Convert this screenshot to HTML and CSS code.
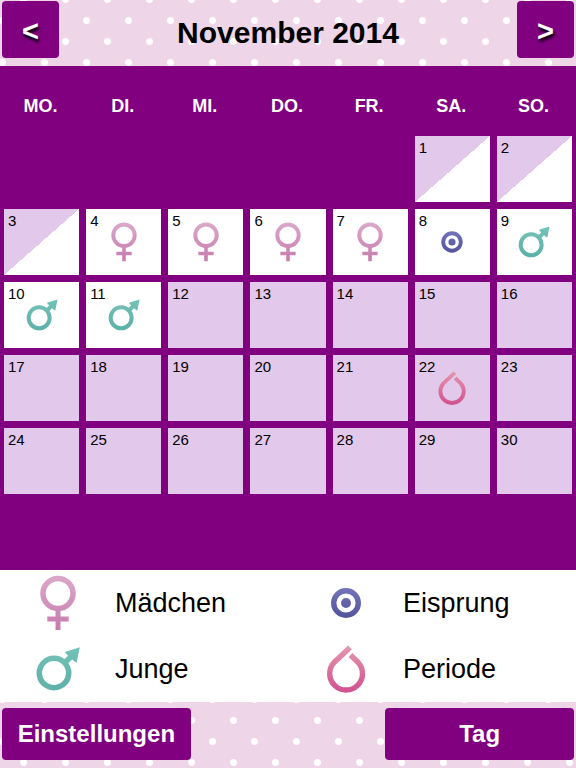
FILE: index.html
```html
<!DOCTYPE html>
<html lang="de">
<head>
    <meta charset="UTF-8">
    <meta name="viewport" content="width=device-width, initial-scale=1.0">
    <title>Kalender - November 2014</title>
    <link rel="stylesheet" href="styles.css">
</head>
<body>
    <!-- Icon definitions -->
    <svg class="icon-defs" aria-hidden="true">
        <defs>
            <linearGradient id="grad-girl" gradientUnits="userSpaceOnUse" x1="0" y1="0" x2="0" y2="56">
                <stop offset="0" stop-color="#dba9cb"/>
                <stop offset="1" stop-color="#c77bae"/>
            </linearGradient>
            <linearGradient id="grad-boy" gradientUnits="userSpaceOnUse" x1="0" y1="6" x2="0" y2="50">
                <stop offset="0" stop-color="#74c2b8"/>
                <stop offset="1" stop-color="#5cb0a8"/>
            </linearGradient>
            <linearGradient id="grad-egg" gradientUnits="userSpaceOnUse" x1="0" y1="12" x2="0" y2="43">
                <stop offset="0" stop-color="#7474bd"/>
                <stop offset="1" stop-color="#54549c"/>
            </linearGradient>
            <linearGradient id="grad-period" gradientUnits="userSpaceOnUse" x1="0" y1="4" x2="0" y2="52">
                <stop offset="0" stop-color="#e598ad"/>
                <stop offset="1" stop-color="#d0508f"/>
            </linearGradient>
            <symbol id="icon-girl" viewBox="0 0 56 56">
                <g fill="none" stroke="url(#grad-girl)" stroke-width="5.5">
                    <circle cx="28" cy="18.5" r="15"/>
                    <path d="M28 33.5 L28.01 55 M17.3 44 L38.7 44.01" stroke-width="5"/>
                </g>
            </symbol>
            <symbol id="icon-boy" viewBox="0 0 56 56">
                <circle cx="24" cy="32" r="14.7" fill="none" stroke="url(#grad-boy)" stroke-width="5.6"/>
                <path d="M32.5 20 L38 14.8 L34.8 11 L49.8 6.3 L46.5 22 L42 18.6 L36.5 24 Z" fill="url(#grad-boy)"/>
            </symbol>
            <symbol id="icon-egg" viewBox="0 0 56 56">
                <circle cx="28" cy="28" r="12.3" fill="none" stroke="url(#grad-egg)" stroke-width="5.4"/>
                <circle cx="28" cy="28" r="5" fill="url(#grad-egg)"/>
            </symbol>
            <symbol id="icon-period" viewBox="0 0 56 56">
                <path d="M32 6.5 L16 21.5 A16.4 16.4 0 1 0 40.2 21.5 L32.5 14" fill="none" stroke="url(#grad-period)" stroke-width="5.4"/>
            </symbol>
        </defs>
    </svg>

    <header class="header">
        <button type="button" class="btn nav-btn" aria-label="Vorheriger Monat">&lt;</button>
        <h1>November 2014</h1>
        <button type="button" class="btn nav-btn" aria-label="Nächster Monat">&gt;</button>
    </header>

    <main class="calendar">
        <table class="month">
            <thead>
                <tr>
                    <th>MO.</th>
                    <th>DI.</th>
                    <th>MI.</th>
                    <th>DO.</th>
                    <th>FR.</th>
                    <th>SA.</th>
                    <th>SO.</th>
                </tr>
            </thead>
            <tbody>
                <tr>
                    <td class="empty" colspan="5"></td>
                    <td class="half"><div class="day"><span>1</span></div></td>
                    <td class="half"><div class="day"><span>2</span></div></td>
                </tr>
                <tr>
                    <td class="half"><div class="day"><span>3</span></div></td>
                    <td class="fertile"><div class="day"><span>4</span><svg class="icon"><use href="#icon-girl"/></svg></div></td>
                    <td class="fertile"><div class="day"><span>5</span><svg class="icon"><use href="#icon-girl"/></svg></div></td>
                    <td class="fertile"><div class="day"><span>6</span><svg class="icon"><use href="#icon-girl"/></svg></div></td>
                    <td class="fertile"><div class="day"><span>7</span><svg class="icon"><use href="#icon-girl"/></svg></div></td>
                    <td class="fertile"><div class="day"><span>8</span><svg class="icon"><use href="#icon-egg"/></svg></div></td>
                    <td class="fertile"><div class="day"><span>9</span><svg class="icon"><use href="#icon-boy"/></svg></div></td>
                </tr>
                <tr>
                    <td class="fertile"><div class="day"><span>10</span><svg class="icon"><use href="#icon-boy"/></svg></div></td>
                    <td class="fertile"><div class="day"><span>11</span><svg class="icon"><use href="#icon-boy"/></svg></div></td>
                    <td><div class="day"><span>12</span></div></td>
                    <td><div class="day"><span>13</span></div></td>
                    <td><div class="day"><span>14</span></div></td>
                    <td><div class="day"><span>15</span></div></td>
                    <td><div class="day"><span>16</span></div></td>
                </tr>
                <tr>
                    <td><div class="day"><span>17</span></div></td>
                    <td><div class="day"><span>18</span></div></td>
                    <td><div class="day"><span>19</span></div></td>
                    <td><div class="day"><span>20</span></div></td>
                    <td><div class="day"><span>21</span></div></td>
                    <td><div class="day"><span>22</span><svg class="icon"><use href="#icon-period"/></svg></div></td>
                    <td><div class="day"><span>23</span></div></td>
                </tr>
                <tr>
                    <td><div class="day"><span>24</span></div></td>
                    <td><div class="day"><span>25</span></div></td>
                    <td><div class="day"><span>26</span></div></td>
                    <td><div class="day"><span>27</span></div></td>
                    <td><div class="day"><span>28</span></div></td>
                    <td><div class="day"><span>29</span></div></td>
                    <td><div class="day"><span>30</span></div></td>
                </tr>
            </tbody>
        </table>
    </main>

    <ul class="legend">
        <li><svg class="icon"><use href="#icon-girl"/></svg>Mädchen</li>
        <li><svg class="icon"><use href="#icon-egg"/></svg>Eisprung</li>
        <li><svg class="icon"><use href="#icon-boy"/></svg>Junge</li>
        <li><svg class="icon"><use href="#icon-period"/></svg>Periode</li>
    </ul>

    <footer class="footer">
        <button type="button" class="btn">Einstellungen</button>
        <button type="button" class="btn">Tag</button>
    </footer>
</body>
</html>
```
FILE: styles.css
```css
* {
    box-sizing: border-box;
}
body {
    font-family: "Liberation Sans", Arial, sans-serif;
    margin: 0;
    min-height: 100vh;
    display: flex;
    flex-direction: column;
    background-color: #fff;
    color: #000;
}
.icon-defs {
    position: absolute;
    width: 0;
    height: 0;
}

/* dotted bars */
.header,
.footer {
    display: flex;
    justify-content: space-between;
    background-color: #eed6e8;
    background-image:
        radial-gradient(circle at 25% 25%, #fff 3px, transparent 4px),
        radial-gradient(circle at 75% 75%, #fff 3px, transparent 4px);
    background-size: 42px 42px;
}
.header {
    align-items: flex-start;
    height: 66px;
    padding: 1px 2px;
    background-position: 34px 10px;
}
.footer {
    height: 66px;
    padding: 6px 2px 8px;
    background-position: 13px 8px;
}
h1 {
    margin: 0;
    font-size: 30px;
    line-height: 64px;
}
.btn {
    width: 33%;
    padding: 0;
    border: none;
    border-radius: 4px;
    background-color: #800080;
    color: #fff;
    font-family: inherit;
    font-size: 24px;
    font-weight: bold;
    cursor: pointer;
}
.nav-btn {
    width: 57px;
    height: 57px;
    padding-top: 4px;
    font-size: 29px;
    text-shadow: 1px 3px 3px #000;
}

/* month grid */
.calendar {
    flex: 1;
    background-color: #800080;
    overflow: hidden;
}
.month {
    width: calc(100% + 6px);
    margin: 0 -3px;
    table-layout: fixed;
    border-collapse: separate;
    border-spacing: 7px;
}
.month th {
    height: 56px;
    padding: 10px 2px 0 0;
    color: #fff;
    font-size: 18px;
}
.month td {
    padding: 0;
    background-color: #e2c8ea;
}
.month .empty {
    background: none;
}
.month .half {
    background: linear-gradient(to bottom right, #e2c8ea 50%, #fff 50%);
}
.month .fertile {
    background-color: #fff;
}
.day {
    display: grid;
    height: 66px;
    padding: 0 4px;
    font-size: 15px;
    line-height: 24px;
}
.day > * {
    grid-area: 1 / 1;
}
.day .icon {
    width: 40px;
    height: 40px;
    place-self: center;
}

/* legend */
.legend {
    display: grid;
    grid-template-columns: 1fr 1fr;
    margin: 0;
    padding: 0;
    list-style: none;
    font-size: 27px;
}
.legend li {
    display: flex;
    align-items: center;
    gap: 29px;
    height: 66px;
    padding-left: 30px;
}
.legend .icon {
    width: 56px;
    height: 56px;
}
```
